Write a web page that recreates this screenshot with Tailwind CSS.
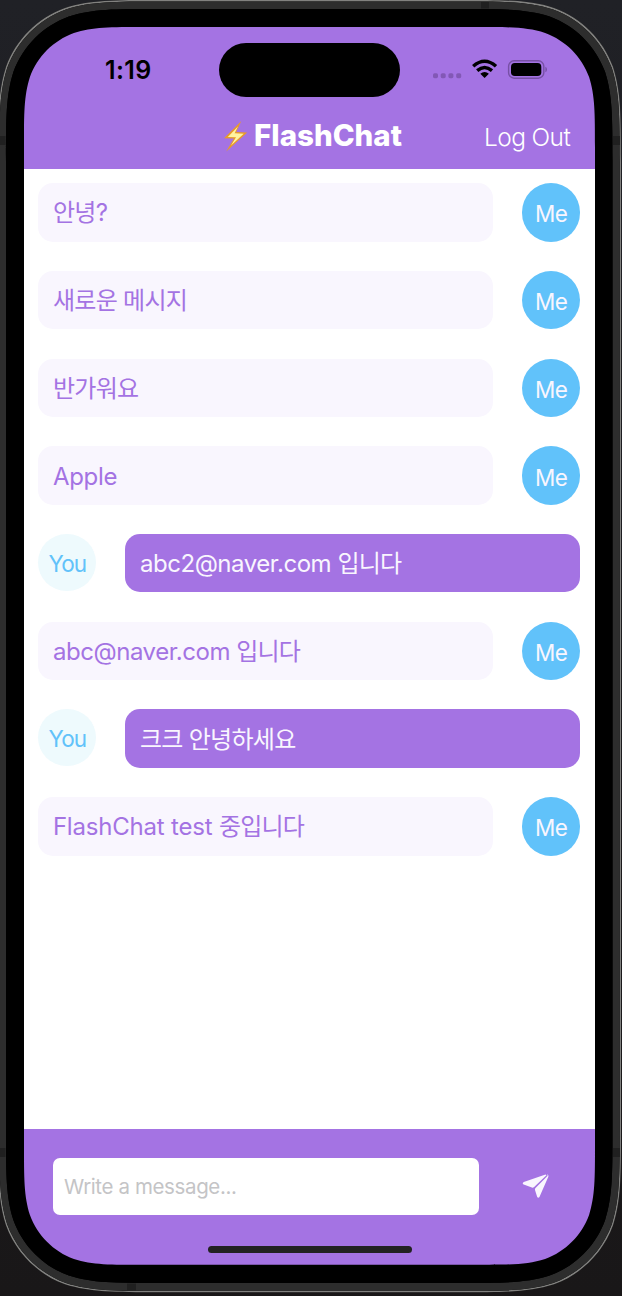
<!DOCTYPE html>
<html lang="ko">
<head>
<meta charset="utf-8">
<title>FlashChat</title>
<script src="https://cdn.jsdelivr.net/npm/@tailwindcss/browser@4"></script>
</head>
<body class="relative h-[1296px] w-[622px] overflow-hidden bg-black font-['Inter','Noto_Sans_CJK_KR',sans-serif]">
<div class="flex h-[1296px] w-[622px] flex-col pt-[27px] pr-[27px] pb-[31px] pl-6">
  <header class="h-[142px] shrink-0 rounded-t-[60px] bg-[#a473e3]">
    <div class="flex h-[86px] items-center">
      <div class="w-[194.500px] pt-[1px] pl-[81px] text-[25px] font-semibold tracking-[0.400px] text-black">1:19</div>
      <div class="h-[53.500px] w-[181.500px] rounded-full bg-black"></div>
      <svg class="ml-[9px] h-[24px] w-[98px]" viewBox="0 0 98 24">
        <g fill="#8258b5"><rect x="24" y="15.200" width="5" height="5" rx="1.6"/><rect x="31.7" y="15.200" width="5" height="5" rx="1.6"/><rect x="39.4" y="15.200" width="5" height="5" rx="1.6"/><rect x="47.2" y="15.200" width="5" height="5" rx="1.6"/></g>
        <g fill="none" stroke="#000" stroke-width="3.500"><path d="M64.200 8.200Q75.600 -1.800 87 8.200"/><path d="M68.200 12.600Q75.600 6.400 83 12.600"/></g>
        <path d="M71.300 15.700Q75.600 12.100 79.900 15.700L75.600 20Z"/>
      </svg>
      <svg class="h-[24px] w-[44px]" viewBox="0 0 44 24">
        <rect x="1.600" y="2.800" width="35.200" height="17.400" rx="5.500" fill="none" stroke="#7750a5" stroke-width="1.400"/>
        <rect x="4" y="5.100" width="30.300" height="12.900" rx="3.800"/>
        <path d="M38.400 8.700Q40 9.400 40 11.400T38.400 14.200Z" fill="#7750a5"/>
      </svg>
    </div>
    <div class="flex h-[56px] items-center">
      <div class="flex w-[460px] items-center pb-[11px] pl-[199px]">
        <svg class="h-[32px] w-[25px] shrink-0" viewBox="0 0 25 32">
          <path d="M18.300 1L1 18.200L11 18.600L3.200 31.400L24.200 12.600L13.200 12Z" fill="#e99b28"/>
          <path d="M15 6.500L4.800 16.900L13 17.200L8 25.600L20.700 13.800L11.600 13.300Z" fill="#fff3a0"/>
        </svg>
        <h1 class="ml-[6px] pb-[2px] text-[29.500px] leading-[34px] font-extrabold tracking-[0px] whitespace-nowrap text-white">FlashChat</h1>
      </div>
      <div class="pb-[8px] text-[24.500px] leading-[30px] font-[360] tracking-[-0.600px] whitespace-nowrap text-white">Log Out</div>
    </div>
  </header>
  <main class="flex h-[959.500px] shrink-0 flex-col gap-[29.300px] bg-white pt-[14.300px] pr-[14.600px] pl-[14.400px] text-[24px] leading-[30px] font-[370]">
    <div class="flex h-[58.400px] justify-between"><div class="flex w-[455px] items-center rounded-[15px] bg-[#f9f6fe] px-[14.500px] pt-[2px] text-[#a473e3]"><p class="tracking-[-0.600px]">안녕?</p></div><div class="flex h-[58.400px] w-[58.400px] items-center justify-center rounded-full bg-[#61c2fa] pt-[4px] text-[22.500px] tracking-[-0.500px] text-[#f9f6fe]">Me</div></div>
    <div class="flex h-[58.400px] justify-between"><div class="flex w-[455px] items-center rounded-[15px] bg-[#f9f6fe] px-[14.500px] pt-[2px] text-[#a473e3]"><p class="tracking-[-0.700px]">새로운 메시지</p></div><div class="flex h-[58.400px] w-[58.400px] items-center justify-center rounded-full bg-[#61c2fa] pt-[4px] text-[22.500px] tracking-[-0.500px] text-[#f9f6fe]">Me</div></div>
    <div class="flex h-[58.400px] justify-between"><div class="flex w-[455px] items-center rounded-[15px] bg-[#f9f6fe] px-[14.500px] pt-[2px] text-[#a473e3]"><p class="tracking-[-0.700px]">반가워요</p></div><div class="flex h-[58.400px] w-[58.400px] items-center justify-center rounded-full bg-[#61c2fa] pt-[4px] text-[22.500px] tracking-[-0.500px] text-[#f9f6fe]">Me</div></div>
    <div class="flex h-[58.400px] justify-between"><div class="flex w-[455px] items-center rounded-[15px] bg-[#f9f6fe] px-[14.500px] pt-[2px] text-[#a473e3]"><p class="tracking-[-0.300px]">Apple</p></div><div class="flex h-[58.400px] w-[58.400px] items-center justify-center rounded-full bg-[#61c2fa] pt-[4px] text-[22.500px] tracking-[-0.500px] text-[#f9f6fe]">Me</div></div>
    <div class="flex h-[58.400px] justify-between"><div class="flex h-[57px] w-[58px] items-center justify-center rounded-full bg-[#eefafd] pt-[2px] text-[22.500px] tracking-[-0.800px] text-[#61c2fa]">You</div><div class="flex w-[455px] items-center rounded-[15px] bg-[#a473e3] px-[14.500px] pt-[2px] text-[#f9f6fe]"><p class="tracking-[-0.450px]">abc2@naver.com <span class="tracking-[-0.800px]">입니다</span></p></div></div>
    <div class="flex h-[58.400px] justify-between"><div class="flex w-[455px] items-center rounded-[15px] bg-[#f9f6fe] px-[14.500px] pt-[2px] text-[#a473e3]"><p class="tracking-[-0.450px]">abc@naver.com <span class="tracking-[-0.800px]">입니다</span></p></div><div class="flex h-[58.400px] w-[58.400px] items-center justify-center rounded-full bg-[#61c2fa] pt-[4px] text-[22.500px] tracking-[-0.500px] text-[#f9f6fe]">Me</div></div>
    <div class="flex h-[58.400px] justify-between"><div class="flex h-[57px] w-[58px] items-center justify-center rounded-full bg-[#eefafd] pt-[2px] text-[22.500px] tracking-[-0.800px] text-[#61c2fa]">You</div><div class="flex w-[455px] items-center rounded-[15px] bg-[#a473e3] px-[14.500px] pt-[2px] text-[#f9f6fe]"><p class="tracking-[-0.700px]">크크 안녕하세요</p></div></div>
    <div class="flex h-[58.400px] justify-between"><div class="flex w-[455px] items-center rounded-[15px] bg-[#f9f6fe] px-[14.500px] pt-[2px] text-[#a473e3]"><p class="tracking-[-0.200px]">FlashChat test <span class="tracking-[-0.800px]">중입니다</span></p></div><div class="flex h-[58.400px] w-[58.400px] items-center justify-center rounded-full bg-[#61c2fa] pt-[4px] text-[22.500px] tracking-[-0.500px] text-[#f9f6fe]">Me</div></div>
  </main>
  <footer class="flex min-h-0 flex-1 flex-col items-center rounded-b-[60px] bg-[#a473e3] pt-[29.300px]">
    <div class="flex w-full items-center pl-[29px]">
      <div class="flex h-[57.700px] w-[425.700px] items-center rounded-[7px] bg-white px-[11px] pt-[2px] text-[20.500px] font-[370] tracking-[-0.380px] text-[#c4c4c6]">Write a message...</div>
      <svg class="mb-[2px] ml-[43.500px] h-[28px] w-[28px]" viewBox="0 0 30 30" fill="#f9f6fe">
        <path d="M25.200 2.700L1.900 10.700Q-0.300 12 1.800 13.500L10.600 16.700Q12 17 13 16L26.200 3.600Z"/>
        <path d="M27.500 3.900L14.500 17.200Q13.500 18.300 14 19.500L16.300 26.700Q17.400 28.300 18.700 26.700L28.300 4.700Q28.600 2.700 26.900 2.400Z"/>
      </svg>
    </div>
    <div class="mt-[30.200px] h-[7.500px] w-[204px] rounded-full bg-[#222]"></div>
  </footer>
</div>
<svg class="pointer-events-none absolute inset-0 h-[1296px] w-[622px]" viewBox="0 0 622 1296" fill-rule="evenodd">
  <defs><linearGradient id="desk" x2="0" y2="1"><stop offset="0" stop-color="#202126"/><stop offset="1" stop-color="#191718"/></linearGradient></defs>
  <path id="outside" fill="url(#desk)"/>
  <path id="rim" fill="#81817f"/>
  <path id="metal" fill="#2d2d2d"/>
  <path id="bezel" fill="#000"/>
  <g fill="#202020"><path d="M0 136h5.500v9H0zM613 136h7v9h-7zM0 1148h5.500v9H0zM613 1148h7v9h-7zM481 2h8v6.500h-8zM127 1283.500h9v7h-9z"/></g>
</svg>
<script>
// Rounded rectangle with continuous-curvature corners.
function shape(l, t, r, b, q) {
  const c = (x, y, sx, sy, p) => p.map(([u, v]) => (x + sx * u * q).toFixed(2) + ' ' + (y + sy * v * q).toFixed(2));
  const k = [[0,1.5287],[0,1.0885],[0,.8684],[.0749,.6315],[.1691,.3728],[.3728,.1691],[.6315,.0749],[.8684,0],[1.0885,0],[1.5287,0]];
  const all = [c(l,t,1,1,k), c(r,t,-1,1,k.slice().reverse()), c(r,b,-1,-1,k), c(l,b,1,-1,k.slice().reverse())];
  return all.map((p, i) => (i ? 'L' : 'M') + p[0] + 'C' + p.slice(1).join(' ')).join('') + 'Z';
}
const outer = shape(-2, 0, 621, 1292.3, 106);
const edge = shape(-0.7, 1.5, 619.7, 1290.9, 105.5);
const black = shape(6, 9, 612.5, 1283, 99.5);
const screen = shape(24, 27, 595, 1264.8, 79);
const set = (id, d) => document.getElementById(id).setAttribute('d', d);
set('outside', 'M0 0H622V1296H0Z' + outer);
set('rim', outer + edge);
set('metal', edge + black);
set('bezel', black + screen);
</script>
</body>
</html>
